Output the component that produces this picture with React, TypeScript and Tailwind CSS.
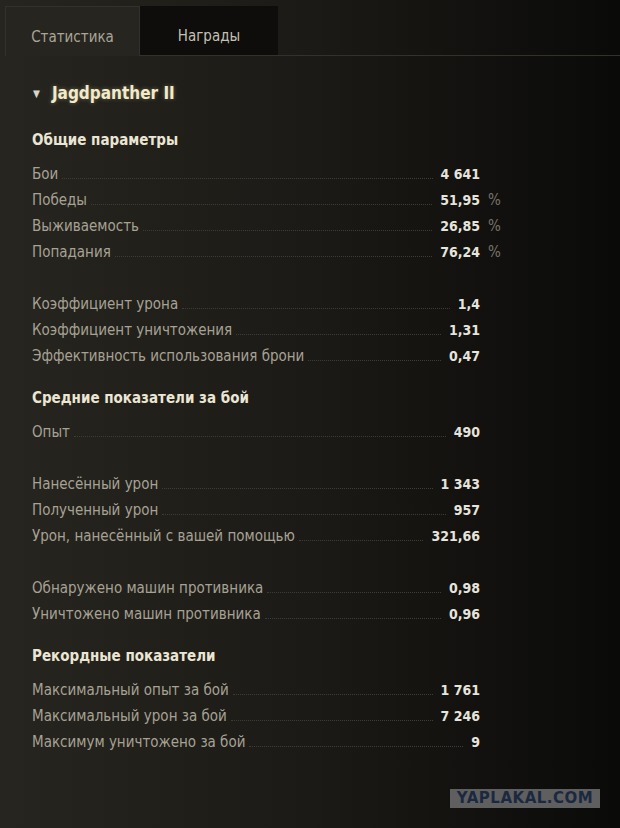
import React from "react";

type Row = { label: string; value: string; pct?: boolean } | null;

const sections: { title: string; rows: Row[] }[] = [
	{
		title: "Общие параметры",
		rows: [
			{ label: "Бои", value: "4 641" },
			{ label: "Победы", value: "51,95", pct: true },
			{ label: "Выживаемость", value: "26,85", pct: true },
			{ label: "Попадания", value: "76,24", pct: true },
			null,
			{ label: "Коэффициент урона", value: "1,4" },
			{ label: "Коэффициент уничтожения", value: "1,31" },
			{ label: "Эффективность использования брони", value: "0,47" },
		],
	},
	{
		title: "Средние показатели за бой",
		rows: [
			{ label: "Опыт", value: "490" },
			null,
			{ label: "Нанесённый урон", value: "1 343" },
			{ label: "Полученный урон", value: "957" },
			{ label: "Урон, нанесённый с вашей помощью", value: "321,66" },
			null,
			{ label: "Обнаружено машин противника", value: "0,98" },
			{ label: "Уничтожено машин противника", value: "0,96" },
		],
	},
	{
		title: "Рекордные показатели",
		rows: [
			{ label: "Максимальный опыт за бой", value: "1 761" },
			{ label: "Максимальный урон за бой", value: "7 246" },
			{ label: "Максимум уничтожено за бой", value: "9" },
		],
	},
];

const font = { fontFamily: '"DejaVu Sans Condensed", "Liberation Sans", sans-serif' };

const StatRow: React.FC<{ row: Row }> = ({ row }) => {
	if (!row) return <div className="h-[26px]" />;
	return (
		<div className="flex h-[26px] items-center">
			<span className="text-[15px] text-[#a6a294]">{row.label}</span>
			<span className="mx-[4px] mb-[-8px] h-0 flex-1 border-b border-dotted border-[#3f3c34]" />
			<span className="ml-[4px] text-[14px] font-bold text-[#e6e4dc]">{row.value}</span>
			<span className="w-[20px] pl-[8px] text-[15px] text-[#77746b]">{row.pct ? "%" : ""}</span>
		</div>
	);
};

export default function App() {
	return (
		<div
			className="relative h-[828px] w-[620px] overflow-hidden bg-linear-to-r from-[#27251f] via-[#1c1a16] to-[#0a0a09]"
			style={font}
		>
			{/* tabs */}
			<div className="flex pl-[5px] pt-[6px]">
				<div className="flex h-[50px] w-[135px] items-center justify-center border-t border-l border-r border-[#34312a] bg-[#27251f] pt-[12px] text-[15px] text-[#a9a598]">
					Статистика
				</div>
				<div className="flex h-[50px] w-[138px] items-center justify-center border-b border-[#34312b] bg-[#0e0d0b] pt-[12px] text-[15px] text-[#c4c0b4]">
					Награды
				</div>
				<div className="h-[50px] flex-1 border-b border-[#34312b]" />
			</div>

			{/* title */}
			<div className="flex items-center pl-[33px] pt-[25px]">
				<span className="text-[10px] text-[#d8d4c8]">▼</span>
				<span className="ml-[12px] text-[17px] font-bold text-[#f2ebc9] [text-shadow:0_0_4px_rgba(240,230,180,0.35)]">
					Jagdpanther II
				</span>
			</div>

			<div className="w-[500px] pl-[32px] pt-[21px]">
				{sections.map((s, i) => (
					<div key={i} className={i === 0 ? "" : "mt-[16px]"}>
						<div className="flex h-[26px] items-center text-[15px] font-bold text-[#ebe6d4]">{s.title}</div>
						<div className="mt-[8px]">
							{s.rows.map((r, j) => (
								<StatRow key={j} row={r} />
							))}
						</div>
					</div>
				))}
			</div>

			{/* watermark overlay */}
			<div
				className="absolute left-[450px] top-[789px] flex h-[19px] w-[150px] items-center justify-center bg-[#5f5f5f] text-[15px] font-black tracking-[0.5px] text-[#1b2940]"
				style={{ fontFamily: '"DejaVu Sans", sans-serif' }}
			>
				YAPLAKAL.COM
			</div>
		</div>
	);
}
